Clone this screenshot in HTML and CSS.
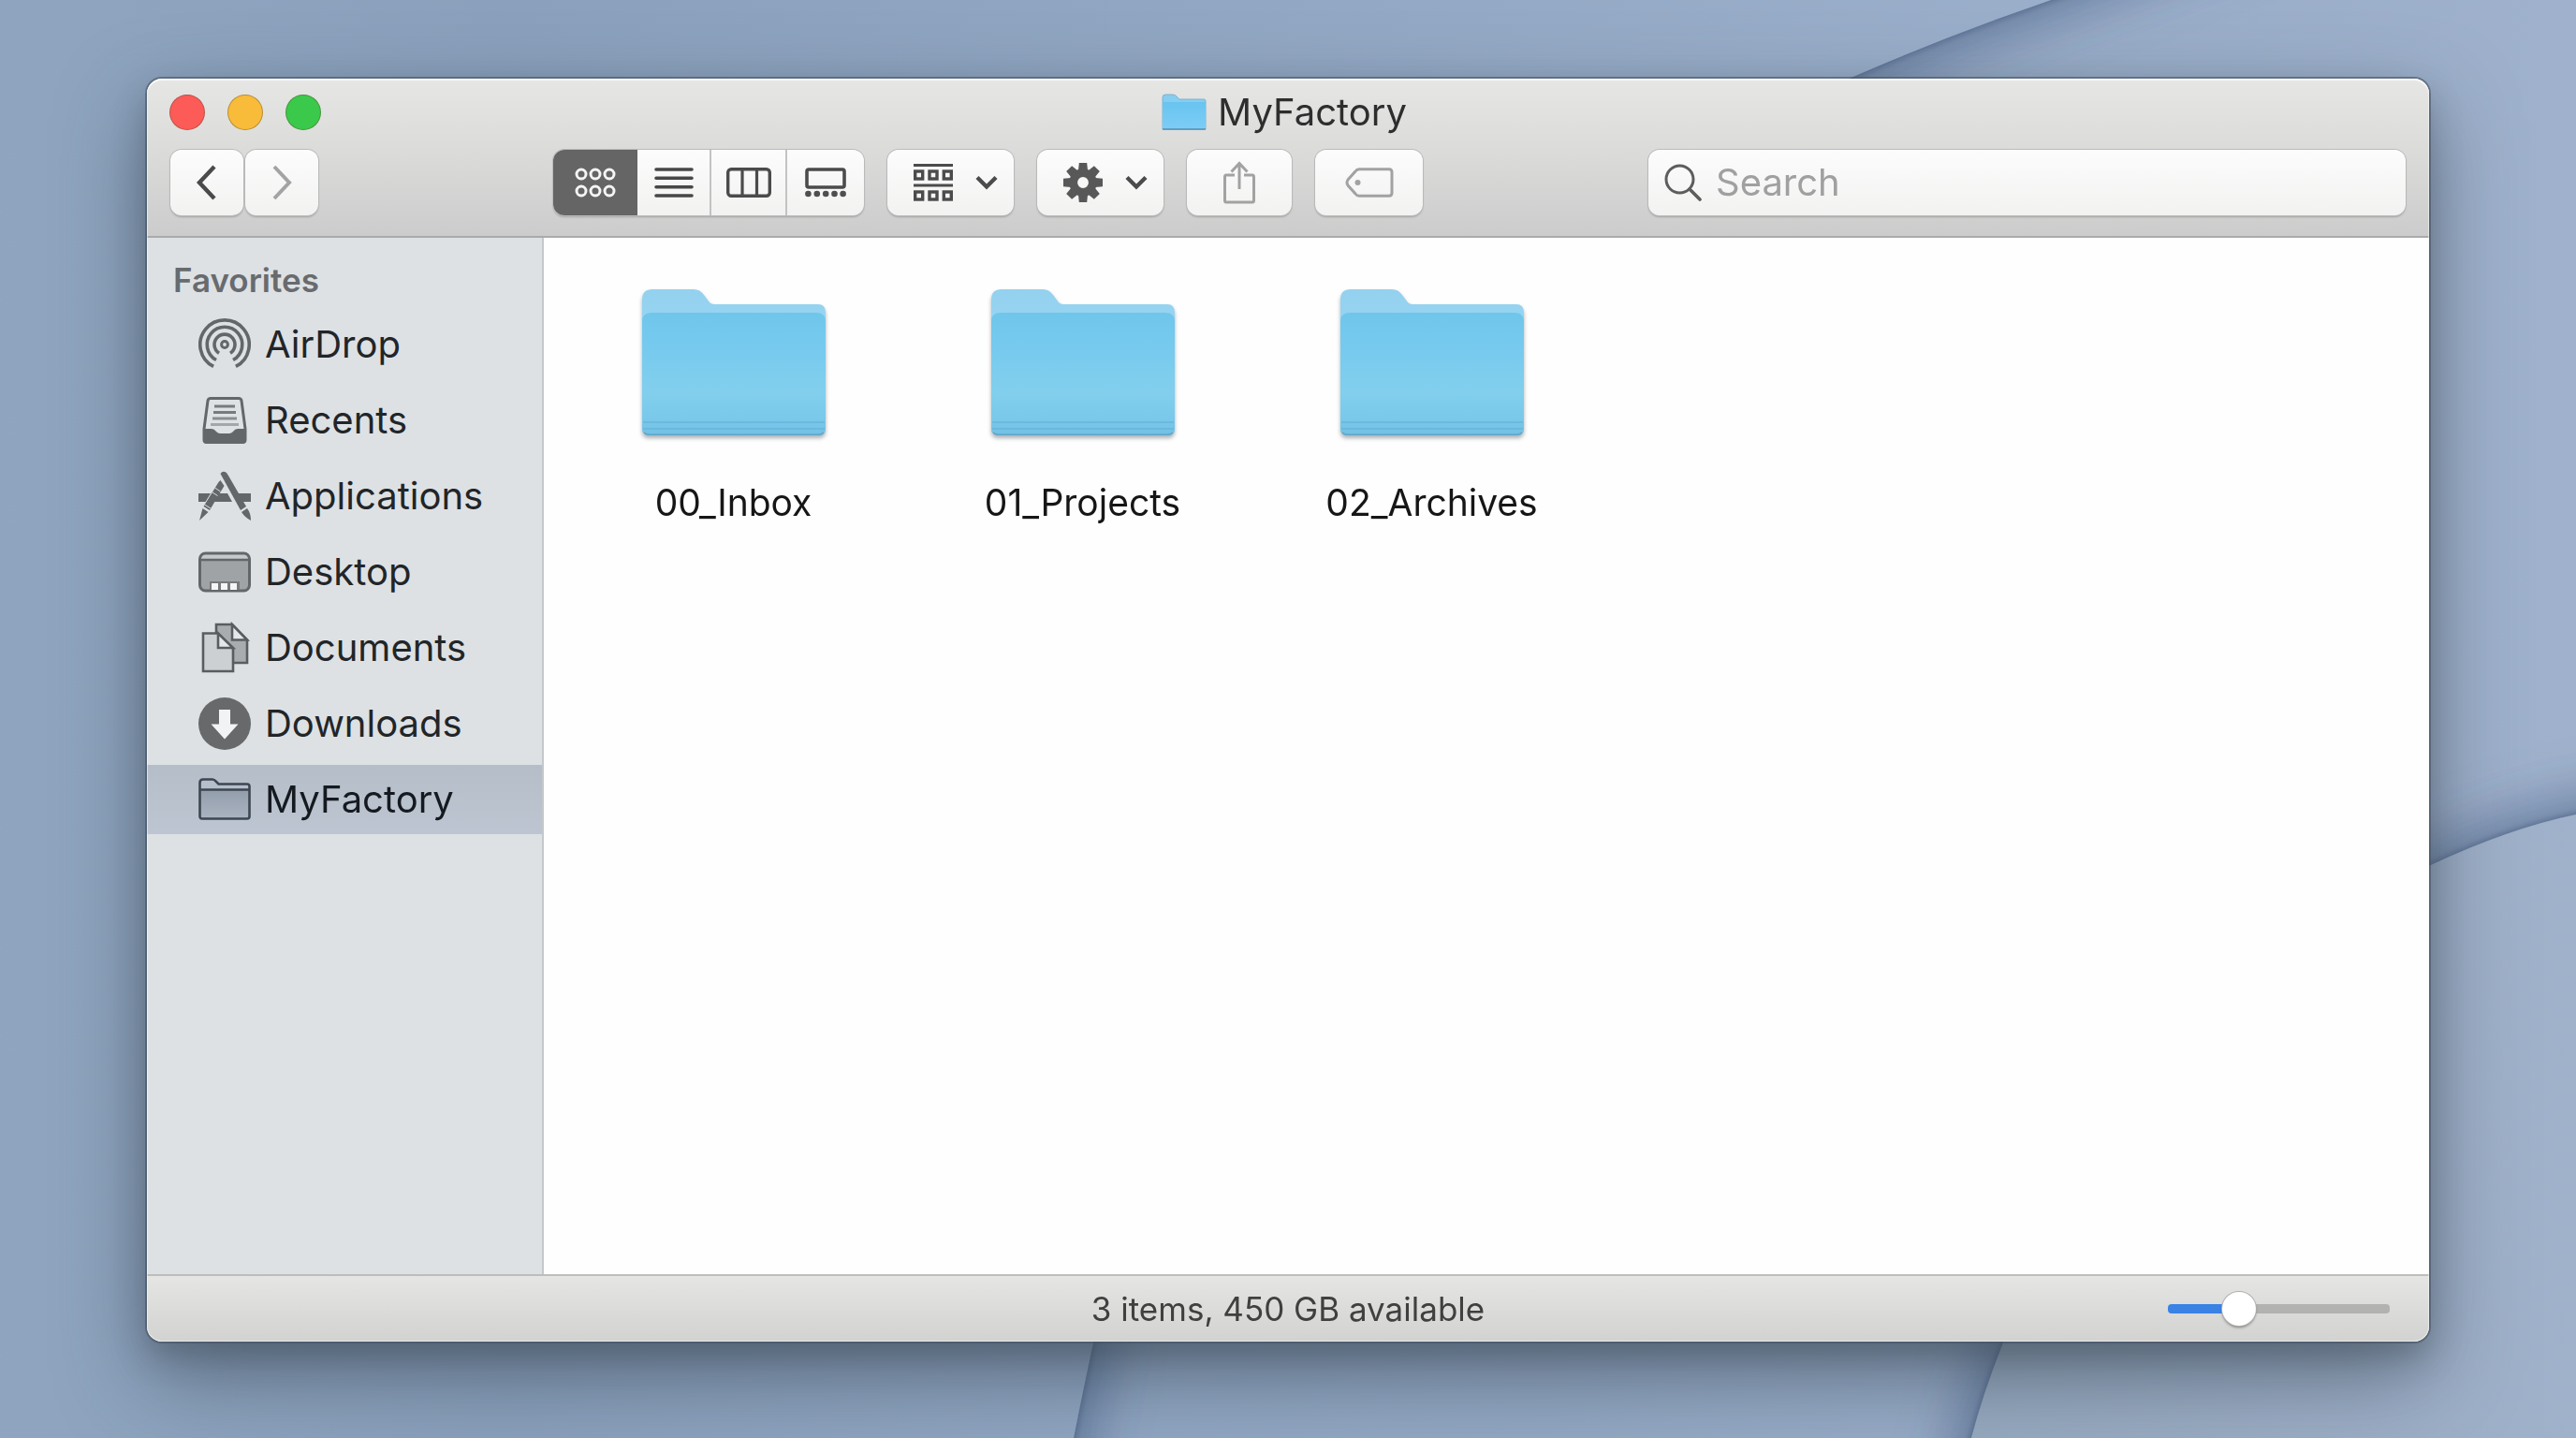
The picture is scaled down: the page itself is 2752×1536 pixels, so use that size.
FILE: index.html
```html
<!DOCTYPE html>
<html lang="en">
<head>
<meta charset="utf-8">
<meta name="viewport" content="width=device-width, initial-scale=1">
<title>MyFactory</title>
<link rel="stylesheet" href="styles.css">
</head>
<body>
<svg class="wallpaper" viewBox="0 0 2752 1536" preserveAspectRatio="xMidYMid slice" aria-hidden="true">
  <defs>
    <linearGradient id="sky" x1="0" y1="0" x2="1" y2="0">
      <stop offset="0" stop-color="#8ba3c0"/><stop offset="0.6" stop-color="#93a8c4"/><stop offset="1" stop-color="#9fb1cc"/>
    </linearGradient>
    <linearGradient id="leftSheet" x1="0" y1="0" x2="1" y2="0">
      <stop offset="0" stop-color="#90a6c0"/><stop offset="0.25" stop-color="#8aa0bc"/><stop offset="1" stop-color="#9db1cd"/>
    </linearGradient>
    <linearGradient id="rightSheet" x1="0" y1="0" x2="1" y2="0">
      <stop offset="0" stop-color="#96a9bf"/><stop offset="1" stop-color="#a2b3cd"/>
    </linearGradient>
    <filter id="fold" x="-10%" y="-10%" width="120%" height="120%">
      <feDropShadow dx="0" dy="0" stdDeviation="34" flood-color="#4a6084" flood-opacity="0.55"/>
      <feDropShadow dx="0" dy="0" stdDeviation="4" flood-color="#364a70" flood-opacity="0.75"/>
    </filter>
  </defs>
  <rect width="2752" height="1536" fill="url(#sky)"/>
  <path filter="url(#fold)" fill="url(#rightSheet)" d="M2080 1640 L2106 1536 Q2118 1490 2140 1434 C2230 1200 2400 1000 2597 924 Q2680 885 2752 870 L2900 845 V1640 Z"/>
  <path filter="url(#fold)" fill="url(#leftSheet)" d="M-100 -100 H2460 L2191 0 Q2080 38 1975 84 C1500 300 1240 900 1168 1434 Q1156 1490 1147 1536 L1130 1640 H-100 Z"/>
</svg>

<main class="window">
  <header class="header">
    <div class="titlebar">
      <div class="lights">
        <button class="light light-close" type="button" aria-label="Close"></button>
        <button class="light light-minimize" type="button" aria-label="Minimize"></button>
        <button class="light light-zoom" type="button" aria-label="Zoom"></button>
      </div>
      <h1 class="title">
        <svg class="title-icon" width="48" height="40" viewBox="0 0 48 40" aria-hidden="true">
          <defs><linearGradient id="mini" x1="0" y1="0" x2="0" y2="1"><stop offset="0" stop-color="#68c4ef"/><stop offset="1" stop-color="#7dcdf6"/></linearGradient></defs>
          <path d="M1 4 Q1 1 4 1 H12 Q15 1 17 4 L19 6 H45 Q47 6 47 8 V38 H1 Z" fill="#86cdf0" stroke="#7fb2cc"/>
          <path d="M1 9 H47 V38 H1 Z" fill="url(#mini)"/>
          <path d="M1 38 H47" stroke="#5f9fc4" stroke-width="2"/>
        </svg>
        MyFactory
      </h1>
    </div>
    <div class="toolbar">
      <nav class="history" aria-label="History">
        <button class="tool tool-nav" type="button" aria-label="Back">
          <svg width="24" height="40" viewBox="0 0 24 40"><path d="M20 3 L4 20 L20 37" fill="none" stroke="#4a4a4a" stroke-width="4.4"/></svg>
        </button>
        <button class="tool tool-nav" type="button" aria-label="Forward" disabled>
          <svg width="24" height="40" viewBox="0 0 24 40"><path d="M4 3 L20 20 L4 37" fill="none" stroke="#a3a3a3" stroke-width="4"/></svg>
        </button>
      </nav>
      <div class="views" role="group" aria-label="View">
        <button class="view view-active" type="button" aria-label="Icons" aria-pressed="true">
          <svg width="44" height="32" viewBox="0 0 44 32"><g fill="none" stroke="#f4f4f4" stroke-width="3"><circle cx="7" cy="7" r="5"/><circle cx="22" cy="7" r="5"/><circle cx="37" cy="7" r="5"/><circle cx="7" cy="25" r="5"/><circle cx="22" cy="25" r="5"/><circle cx="37" cy="25" r="5"/></g></svg>
        </button>
        <button class="view" type="button" aria-label="List" aria-pressed="false">
          <svg width="44" height="34" viewBox="0 0 44 34"><path d="M3 3 H41 M3 12.3 H41 M3 21.7 H41 M3 31 H41" stroke="#474747" stroke-width="3.6" stroke-linecap="round"/></svg>
        </button>
        <button class="view" type="button" aria-label="Columns" aria-pressed="false">
          <svg width="48" height="32" viewBox="0 0 48 32"><path d="M17 2 V30 M32.5 2 V30" stroke="#4b4b4b" stroke-width="3.2"/><rect x="1.7" y="1.7" width="44.6" height="28.6" rx="3.5" fill="none" stroke="#4b4b4b" stroke-width="3.4"/></svg>
        </button>
        <button class="view" type="button" aria-label="Gallery" aria-pressed="false">
          <svg width="44" height="32" viewBox="0 0 44 32"><rect x="2" y="2" width="40" height="19" rx="2" fill="none" stroke="#4b4b4b" stroke-width="3.6"/><g fill="#4f4f4f"><circle cx="3.4" cy="28" r="3.3"/><circle cx="12.8" cy="28" r="3.3"/><circle cx="22.2" cy="28" r="3.3"/><circle cx="31.5" cy="28" r="3.3"/><circle cx="40.6" cy="28" r="3.3"/></g></svg>
        </button>
      </div>
      <button class="tool tool-menu" type="button" aria-label="Group items" aria-haspopup="menu">
        <svg width="42" height="40" viewBox="0 0 42 40"><path d="M0 1.5 H42 M0 23 H42" stroke="#4b4b4b" stroke-width="3"/><g fill="none" stroke="#4b4b4b" stroke-width="3.4"><rect x="1.7" y="8" width="8" height="8"/><rect x="17" y="8" width="8" height="8"/><rect x="32.3" y="8" width="8" height="8"/><rect x="1.7" y="30" width="8" height="8"/><rect x="17" y="30" width="8" height="8"/><rect x="32.3" y="30" width="8" height="8"/></g></svg>
        <svg width="24" height="16" viewBox="0 0 24 16"><path d="M2 2.5 L12 12.5 L22 2.5" fill="none" stroke="#4b4b4b" stroke-width="4.4"/></svg>
      </button>
      <button class="tool tool-menu" type="button" aria-label="Actions" aria-haspopup="menu">
        <svg width="42" height="42" viewBox="-21 -21 42 42"><circle r="10.3" fill="none" stroke="#585858" stroke-width="8.8"/><g fill="#585858"><path id="tooth" d="M-5 -13 L-4.2 -21 H4.2 L5 -13 Z"/><use href="#tooth" transform="rotate(45)"/><use href="#tooth" transform="rotate(90)"/><use href="#tooth" transform="rotate(135)"/><use href="#tooth" transform="rotate(180)"/><use href="#tooth" transform="rotate(225)"/><use href="#tooth" transform="rotate(270)"/><use href="#tooth" transform="rotate(315)"/></g></svg>
        <svg width="24" height="16" viewBox="0 0 24 16"><path d="M2 2.5 L12 12.5 L22 2.5" fill="none" stroke="#4b4b4b" stroke-width="4.4"/></svg>
      </button>
      <button class="tool tool-share" type="button" aria-label="Share" disabled>
        <svg width="36" height="46" viewBox="0 0 36 46"><g fill="none" stroke="#a2a2a2" stroke-width="3"><path d="M13 15 H4 Q2.500 15 2.500 17 V42 Q2.500 44 4 44 H32 Q33.500 44 33.500 42 V17 Q33.500 15 32 15 H23"/><path d="M18 30 V3 M9.500 11.500 L18 2.500 L26.500 11.500"/></g></svg>
      </button>
      <button class="tool tool-tag" type="button" aria-label="Edit tags" disabled>
        <svg width="52" height="32" viewBox="0 0 52 32"><path d="M15 1.800 H47 Q50 1.800 50 5 V27 Q50 30.200 47 30.200 H15 Q12.500 30.200 11 28 L3 19 Q1 16 3 13 L11 4 Q12.500 1.800 15 1.800 Z" fill="none" stroke="#a2a2a2" stroke-width="3"/><circle cx="13.500" cy="16" r="3" fill="#a2a2a2"/></svg>
      </button>
      <label class="search">
        <svg width="40" height="40" viewBox="0 0 40 40" aria-hidden="true"><circle cx="16.500" cy="16.500" r="14.500" fill="none" stroke="#5d5d5d" stroke-width="3"/><path d="M27 27 L38 38" stroke="#5d5d5d" stroke-width="3.600" stroke-linecap="round"/></svg>
        <input class="search-input" type="search" placeholder="Search" aria-label="Search">
      </label>
    </div>
  </header>

  <div class="body">
    <aside class="sidebar">
      <h2 class="sidebar-title">Favorites</h2>
      <ul class="places">
        <li><a class="place" href="#airdrop">
          <svg width="56" height="56" viewBox="-28 -28 56 56" aria-hidden="true"><g fill="none" stroke="#63676a" stroke-width="3.600"><path d="M-11.900 23.400 A26.200 26.200 0 1 1 11.900 23.400"/><path d="M-9 16.500 A18.800 18.800 0 1 1 9 16.500"/><path d="M-6 9.300 A11 11 0 1 1 6 9.300"/><circle r="3.400" stroke-width="3"/></g></svg>
          AirDrop</a></li>
        <li><a class="place" href="#recents">
          <svg width="56" height="56" viewBox="0 0 56 56" aria-hidden="true"><path d="M13 4.500 H43 Q45.500 4.500 46 7 L50 37 V49 Q50 51.500 47 51.500 H9 Q6 51.500 6 49 V37 L10 7 Q10.500 4.500 13 4.500 Z" fill="#dfe2e5" stroke="#63676a" stroke-width="3"/><g stroke-width="3"><path d="M17 13 H39" stroke="#777b7e"/><path d="M16 19.500 H40" stroke="#777b7e"/><path d="M15 26 H41" stroke="#8a8e90"/><path d="M13 32.500 H43" stroke="#a4a7a9"/></g><path d="M5 37 H14 Q17 37 19 40 Q21 42 23 42 H33 Q35 42 37 40 Q39 37 42 37 H51 V48 Q51 53 47 53 H9 Q5 53 5 48 Z" fill="#63676a"/></svg>
          Recents</a></li>
        <li><a class="place" href="#applications">
          <svg width="56" height="56" viewBox="0 0 56 56" aria-hidden="true"><g fill="#63676a"><path d="M0 25 H13 L7.500 34 H0 Z"/><path d="M22 25 H31 L36 34 H16 Z"/><path d="M42 25 H56 V34 H47 Z"/><path d="M23.500 4 Q26 0 30 3 L32 6 L51 39 L45 43 Z"/><path d="M46 45 L52 41 Q56 46 56 54 Q50 51 46 45 Z"/><path d="M23.500 11 L27.500 17 L12 43 L5.500 39 L21.500 13 Z"/><path d="M4.500 41 L10.500 45 L1 54 Z"/></g><path d="M17.500 19 L23.500 23 M15 24 L20.500 27.500 M6.500 37 L13 41" stroke="#dee1e4" stroke-width="1"/></svg>
          Applications</a></li>
        <li><a class="place" href="#desktop">
          <svg width="56" height="56" viewBox="0 0 56 56" aria-hidden="true"><rect x="1.500" y="8" width="53" height="40" rx="6" fill="#a0a3a5"/><path d="M2 15 V13 Q2 8 7 8 H49 Q54 8 54 13 V15 Z" fill="#c6c9cb"/><rect x="1.500" y="8" width="53" height="40" rx="6" fill="none" stroke="#63676a" stroke-width="3"/><path d="M2 15 H54" stroke="#63676a" stroke-width="2.500"/><rect x="12" y="38" width="32" height="9" fill="#77797b"/><path d="M14 40 H21 V47 H14 Z M24 40 H31 V47 H24 Z M34 40 H41 V47 H34 Z" fill="#f4f5f6"/></svg>
          Desktop</a></li>
        <li><a class="place" href="#documents">
          <svg width="56" height="56" viewBox="0 0 56 56" aria-hidden="true"><g stroke="#5a5d60" stroke-width="2.600"><path d="M19 3 H36 L52 19.500 V44 H19 Z" fill="#a9acaf"/><path d="M36 3 V19.500 H52 Z" fill="#e4e7e9"/><path d="M5 12.500 H21 L37 29 V53 H5 Z" fill="#cdd0d3"/><path d="M21 12.500 V28 H37 Z" fill="#e4e7e9"/></g></svg>
          Documents</a></li>
        <li><a class="place" href="#downloads">
          <svg width="56" height="56" viewBox="0 0 56 56" aria-hidden="true"><circle cx="28" cy="28" r="28" fill="#67696a"/><path d="M22 13 H34 V28.500 H42.500 L28 44.500 L13.500 28.500 H22 Z" fill="#f1f3f4"/></svg>
          Downloads</a></li>
        <li><a class="place place-current" href="#myfactory" aria-current="page">
          <svg width="56" height="56" viewBox="0 0 56 56" aria-hidden="true"><defs><linearGradient id="pf" x1="0" y1="0" x2="0" y2="1"><stop offset="0" stop-color="#929dab"/><stop offset="1" stop-color="#aab4c1"/></linearGradient></defs><path d="M1.500 17 V10 Q1.500 6.500 5 6.500 H15 Q17 6.500 18.500 8.500 L21.500 11.500 H52 Q54.500 11.500 54.500 14 V17 Z" fill="#b5bfcb"/><path d="M1.500 17 H54.500 V48.500 H1.500 Z" fill="url(#pf)"/><path d="M1.500 17 V10 Q1.500 6.500 5 6.500 H15 Q17 6.500 18.500 8.500 L21.500 11.500 H52 Q54.500 11.500 54.500 14 V46 Q54.500 48.500 52 48.500 H4 Q1.500 48.500 1.500 46 Z M1.500 17.500 H54.500" fill="none" stroke="#3d4651" stroke-width="2.600"/></svg>
          MyFactory</a></li>
      </ul>
    </aside>

    <section class="files" aria-label="Folders">
      <svg class="defs" width="0" height="0" aria-hidden="true">
        <defs>
          <linearGradient id="tab" x1="0" y1="0" x2="0" y2="1"><stop offset="0" stop-color="#94d1ef"/><stop offset="0.200" stop-color="#96d4f1"/><stop offset="1" stop-color="#78bfe3"/></linearGradient>
          <linearGradient id="front" x1="0" y1="0" x2="0" y2="1"><stop offset="0" stop-color="#6fc6ea"/><stop offset="0.200" stop-color="#74c9ee"/><stop offset="0.650" stop-color="#82cfed"/><stop offset="0.880" stop-color="#79c8ea"/><stop offset="1" stop-color="#72c0e3"/></linearGradient>
          <symbol id="folder" viewBox="0 0 196 156">
            <path d="M0 11 Q0 0 11 0 H55 Q62 0 66 6 L72 14 Q74 16 77 16 H188 Q196 16 196 25 V148 Q196 156 188 156 H8 Q0 156 0 148 Z" fill="url(#tab)"/>
            <path d="M0 33 Q1 25 10 25 H186 Q195 25 196 33 V148 Q196 156 188 156 H8 Q0 156 0 148 Z" fill="url(#front)"/>
            <path d="M1 142 H195 M1 149 H195" stroke="#66b7dc" stroke-width="1.500"/>
            <path d="M2 153 Q4 155.300 8 155.300 H188 Q192 155.300 194 153" fill="none" stroke="#62a5c6" stroke-width="1.500"/>
          </symbol>
        </defs>
      </svg>
      <ul class="grid">
        <li><a class="folder" href="#00_Inbox"><svg class="folder-icon" width="196" height="156" aria-hidden="true"><use href="#folder"/></svg>00_Inbox</a></li>
        <li><a class="folder" href="#01_Projects"><svg class="folder-icon" width="196" height="156" aria-hidden="true"><use href="#folder"/></svg>01_Projects</a></li>
        <li><a class="folder" href="#02_Archives"><svg class="folder-icon" width="196" height="156" aria-hidden="true"><use href="#folder"/></svg>02_Archives</a></li>
      </ul>
    </section>
  </div>

  <footer class="status">
    <p class="status-text">3 items, 450 GB available</p>
    <input class="zoom" type="range" min="0" max="100" value="29" aria-label="Icon size">
  </footer>
</main>
</body>
</html>
```
FILE: styles.css
```css
* {
  box-sizing: border-box;
}

body {
  margin: 0;
  min-height: 100vh;
  display: flex;
  padding: 84px 157px 103px;
  background: #93a7c4;
  color: #222528;
  font-family: Inter, "Liberation Sans", sans-serif;
  font-size: 40px;
  line-height: 48px;
}

button,
input {
  font: inherit;
  margin: 0;
}

button {
  display: flex;
  align-items: center;
  justify-content: center;
  padding: 0;
  border: 0;
}

ul {
  list-style: none;
  margin: 0;
  padding: 0;
}

a {
  color: inherit;
  text-decoration: none;
}

.wallpaper {
  position: fixed;
  inset: 0;
  width: 100%;
  height: 100%;
  z-index: -1;
}

.window {
  position: relative;
  flex: 1;
  display: flex;
  flex-direction: column;
  overflow: hidden;
  border-radius: 16px;
  background: #fefefe;
  box-shadow:
    0 0 0 2px rgba(72, 84, 102, 0.6),
    0 16px 32px rgba(60, 72, 84, 0.35),
    0 36px 90px rgba(50, 62, 74, 0.55);
}

/* Light rim along the window's inner edge */
.window::after {
  content: "";
  position: absolute;
  inset: 0;
  border-radius: 16px;
  box-shadow: inset 0 2px 1px rgba(255, 255, 255, 0.8), inset 0 0 0 1px rgba(255, 255, 255, 0.5);
  pointer-events: none;
}

.header {
  padding-bottom: 22px;
  border-bottom: 2px solid #a9aaaa;
  background: linear-gradient(#e6e6e5, #dadad9 50%, #cbcccb);
}

.titlebar {
  display: grid;
  grid-template-columns: 1fr auto 1fr;
  align-items: center;
  height: 72px;
  margin-bottom: 4px;
  padding: 0 24px;
}

.lights {
  display: flex;
  gap: 24px;
}

.light {
  width: 38px;
  height: 38px;
  border: 1px solid rgba(90, 70, 40, 0.4);
  border-radius: 50%;
}

.light-close {
  background: #fc5b57;
}

.light-minimize {
  background: #f8bc3a;
}

.light-zoom {
  background: #3ac94a;
}

.title {
  display: flex;
  align-items: center;
  gap: 12px;
  margin: 0;
  padding-right: 8px;
  color: #2e2e2e;
  font-size: 40px;
  font-weight: 400;
}

.toolbar {
  display: flex;
  gap: 25px;
  padding: 0 25px;
}

.history {
  display: flex;
  gap: 2px;
  flex: 0 0 384px;
}

.tool,
.views,
.search {
  height: 70px;
  border-radius: 12px;
  background: linear-gradient(#fcfcfc, #f2f2f1);
  box-shadow: 0 0 0 1px #b9baba, 0 2px 2px #a3a4a4;
}

.tool-nav {
  width: 78px;
}

.tool-menu {
  width: 135px;
  gap: 24px;
  padding-left: 10px;
}

.tool-share {
  width: 112px;
}

.tool-tag {
  width: 115px;
}

.views {
  display: grid;
  grid-template-columns: 90px 79px 81px 82px;
  overflow: hidden;
}

.view {
  border-right: 2px solid #c2c3c3;
  background: none;
}

.view:last-child {
  border-right: 0;
}

.view-active {
  border-right: 0;
  background: #656565;
}

.search {
  display: flex;
  align-items: center;
  gap: 15px;
  flex: 0 1 809px;
  min-width: 0;
  margin-left: auto;
  padding: 0 17px;
}

.search svg {
  flex: none;
}

.search-input {
  flex: 1;
  min-width: 0;
  padding: 0;
  border: 0;
  outline: 0;
  background: none;
  color: #333;
}

.search-input::placeholder {
  color: #a0a0a0;
  opacity: 1;
}

.body {
  flex: 1;
  display: flex;
}

.sidebar {
  flex: 0 0 424px;
  border-right: 2px solid #c5c8ca;
  background: #dde1e4;
}

.sidebar-title {
  margin: 0;
  padding: 21px 28px 8px;
  color: #686b6e;
  font-size: 35px;
  font-weight: 600;
}

.places {
  display: flex;
  flex-direction: column;
  gap: 7px;
}

.place {
  display: flex;
  align-items: center;
  gap: 15px;
  height: 74px;
  padding-left: 55px;
}

.place-current {
  background: linear-gradient(#b5bec8, #bcc5d1);
  color: #151a20;
}

.files {
  flex: 1;
  padding: 55px 16px;
  background: #fefefe;
}

.defs {
  position: absolute;
}

.grid {
  display: grid;
  grid-template-columns: repeat(auto-fill, 373px);
  row-gap: 48px;
}

.folder {
  display: flex;
  flex-direction: column;
  align-items: center;
  gap: 48px;
  color: #161616;
  font-size: 39px;
}

.folder-icon {
  filter: drop-shadow(0 3px 2px rgba(70, 80, 90, 0.45));
}

.status {
  display: grid;
  grid-template-columns: 1fr auto 1fr;
  align-items: center;
  height: 72px;
  padding: 0 42px;
  border-top: 2px solid #bcbdbd;
  background: linear-gradient(#e5e5e4, #d2d2d0);
  color: #404040;
}

.status-text {
  grid-column: 2;
  margin: 0;
  font-size: 35px;
}

.zoom {
  justify-self: end;
  width: 237px;
  height: 38px;
  appearance: none;
  background: none;
}

.zoom::-webkit-slider-runnable-track {
  height: 10px;
  border-radius: 4px;
  background: linear-gradient(90deg, #3a82e4 32%, #b2b2b1 32%);
}

.zoom::-webkit-slider-thumb {
  appearance: none;
  width: 36px;
  height: 36px;
  margin-top: -13px;
  border-radius: 50%;
  background: #fff;
  box-shadow: 0 0 0 1px #b0b0b0, 0 2px 3px rgba(0, 0, 0, 0.4);
}
```
